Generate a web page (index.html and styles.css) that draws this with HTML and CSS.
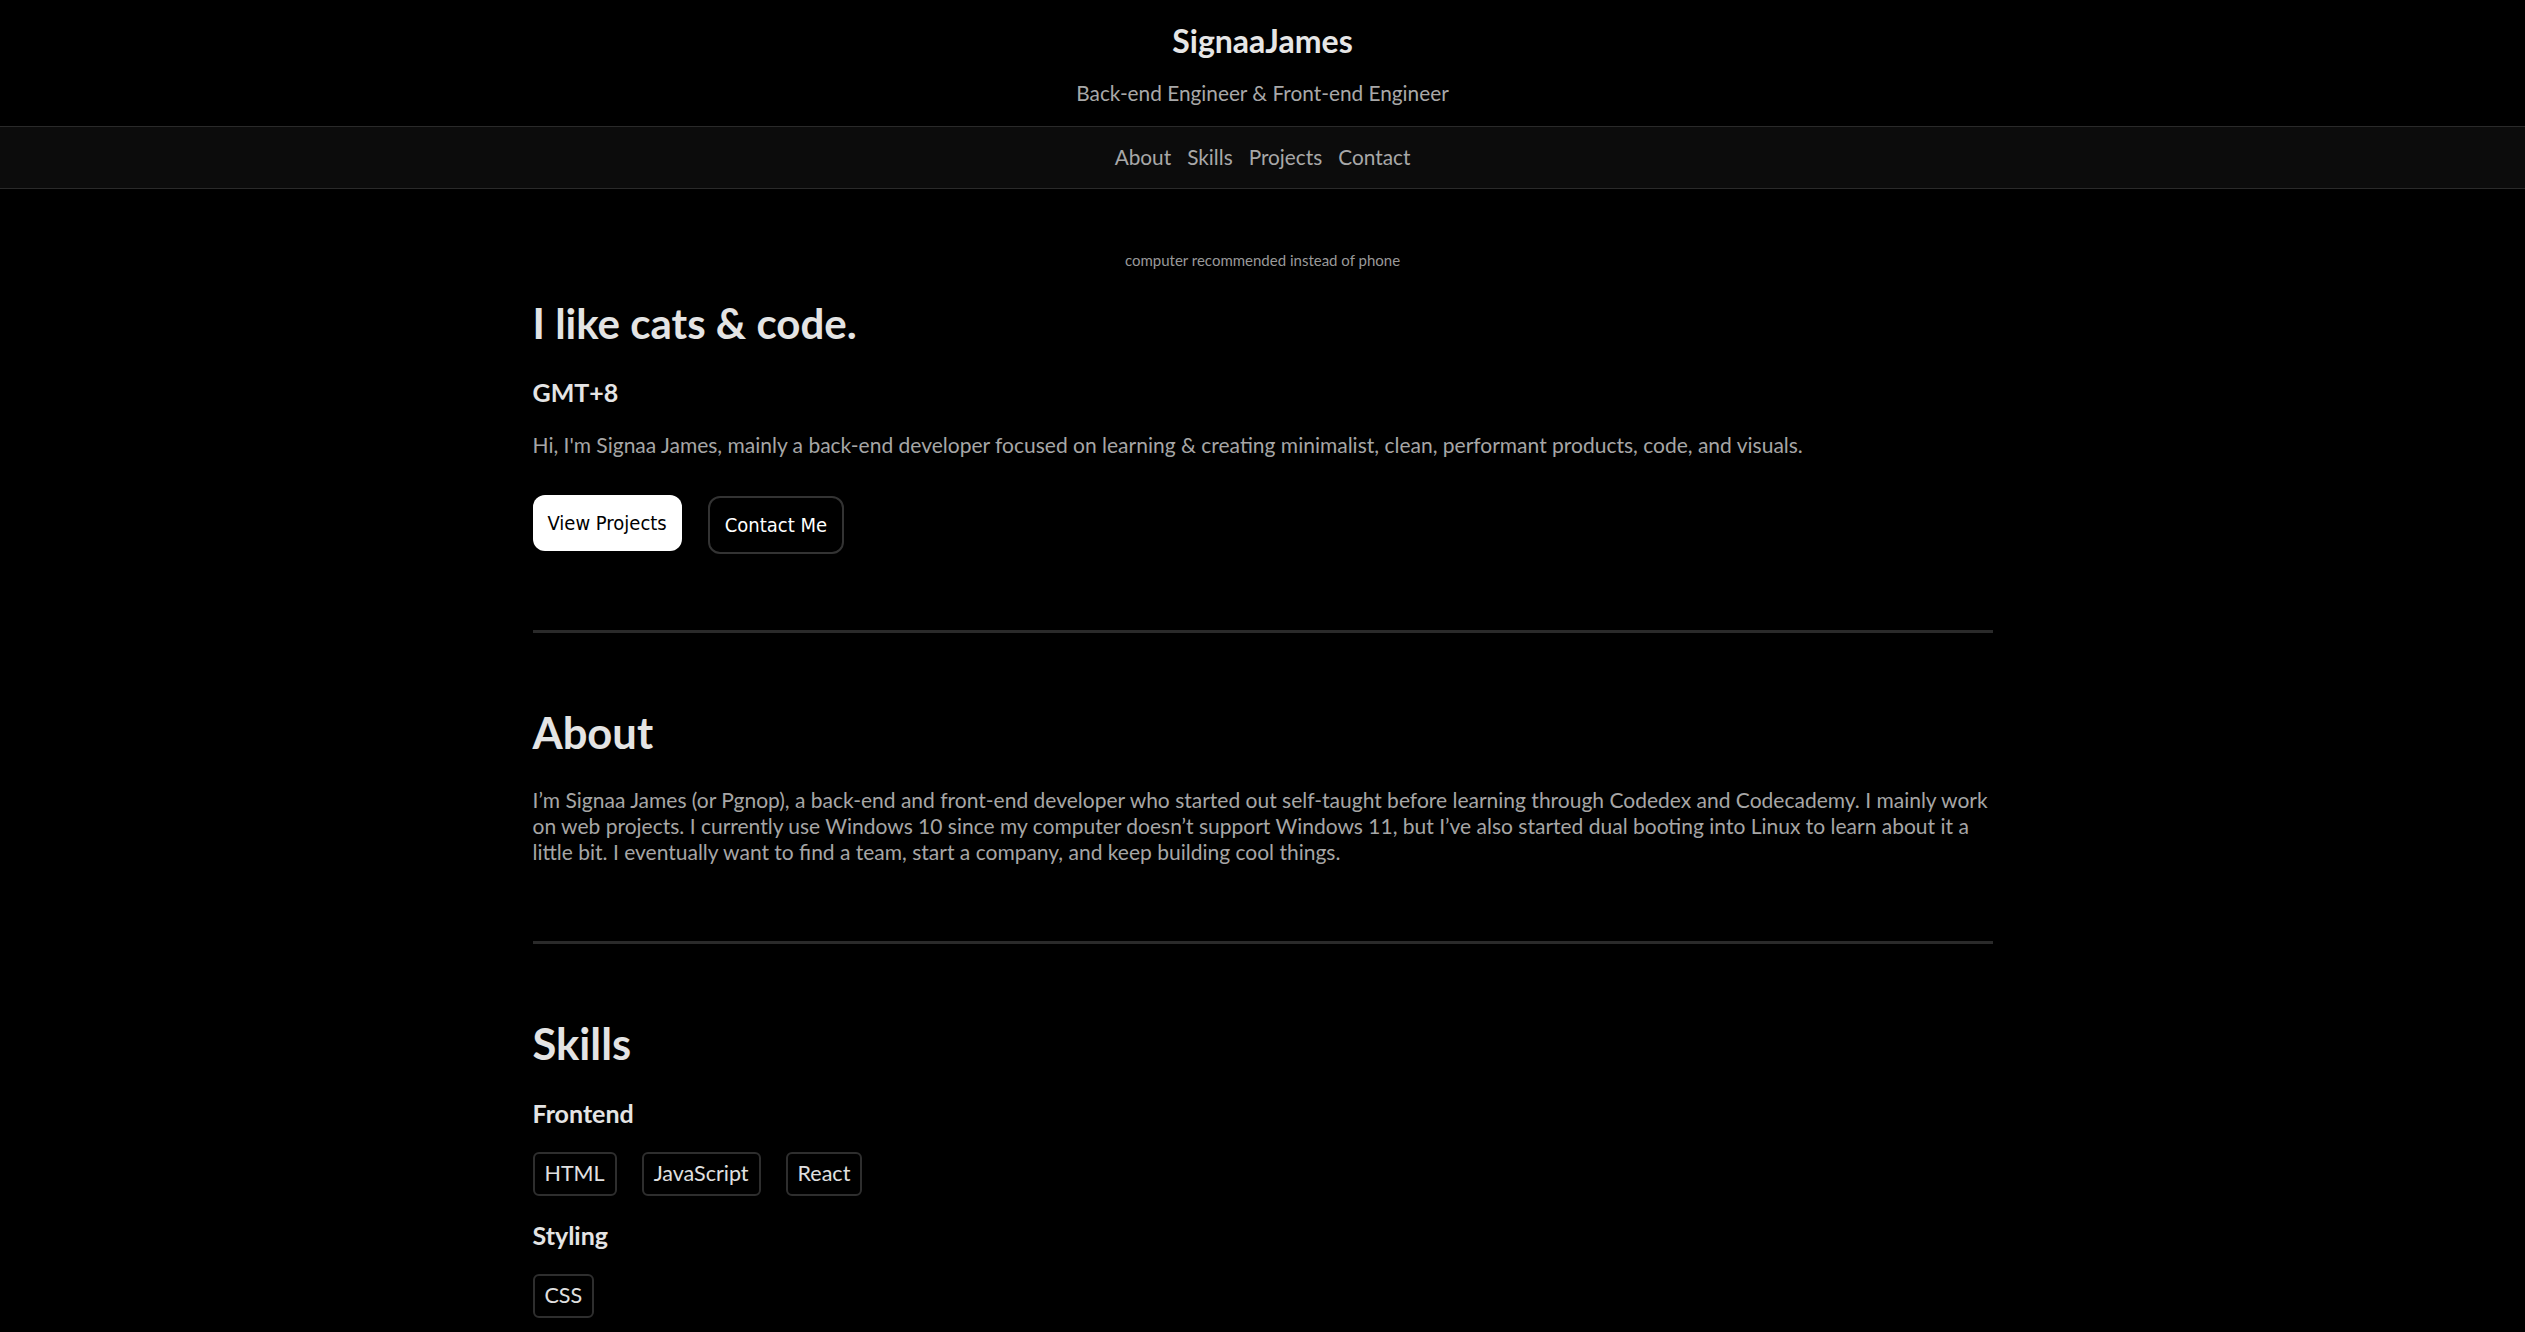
FILE: index.html
```html
<!DOCTYPE html>
<html lang="en">
<head>
<meta charset="utf-8">
<title>SignaaJames</title>
<link rel="stylesheet" href="styles.css">
</head>
<body>
<header class="site-header">
  <h1 class="brand">SignaaJames</h1>
  <p class="tagline">Back-end Engineer &amp; Front-end Engineer</p>
</header>
<nav class="site-nav">
  <a href="#about">About</a>
  <a href="#skills">Skills</a>
  <a href="#projects">Projects</a>
  <a href="#contact">Contact</a>
</nav>
<main class="container">
  <section class="hero">
    <p class="note">computer recommended instead of phone</p>
    <h2 class="big hero-title">I like cats &amp; code.</h2>
    <h3 class="sub">GMT+8</h3>
    <p class="text">Hi, I'm Signaa James, mainly a back-end developer focused on learning &amp; creating minimalist, clean, performant products, code, and visuals.</p>
    <div class="actions">
      <a class="btn btn-primary" href="#projects">View Projects</a>
      <button class="btn btn-outline" type="button">Contact Me</button>
    </div>
  </section>
  <hr class="divider">
  <section class="about" id="about">
    <h2 class="big">About</h2>
    <p class="text">I’m Signaa James (or Pgnop), a back-end and front-end developer who started out self-taught before learning through Codedex and Codecademy. I mainly work on web projects. I currently use Windows 10 since my computer doesn’t support Windows 11, but I’ve also started dual booting into Linux to learn about it a little bit. I eventually want to find a team, start a company, and keep building cool things.</p>
  </section>
  <hr class="divider">
  <section class="skills" id="skills">
    <h2 class="big">Skills</h2>
    <h3 class="sub">Frontend</h3>
    <div class="tags">
      <span class="tag">HTML</span>
      <span class="tag">JavaScript</span>
      <span class="tag">React</span>
    </div>
    <h3 class="sub">Styling</h3>
    <div class="tags">
      <span class="tag">CSS</span>
    </div>
  </section>
</main>
</body>
</html>
```

FILE: styles.css
```css
html, body {
  margin: 0;
  padding: 0;
  background: #000;
}
body {
  font-family: Lato, "Open Sans", sans-serif;
  color: #e4e4e4;
  line-height: 1.2;
}
.site-header {
  text-align: center;
  padding: 21.5px 0 20px;
}
.brand {
  margin: 0 0 21px;
  font-size: 32px;
  font-weight: 700;
  color: #e6e6e6;
  line-height: 1.2;
}
.tagline {
  margin: 0;
  font-size: 20.8px;
  color: #a8a8a8;
}
.site-nav {
  display: flex;
  justify-content: center;
  gap: 16px;
  background: #0c0c0c;
  border-top: 1px solid #2a2a2a;
  border-bottom: 1px solid #2a2a2a;
  padding: 18px 0;
}
.site-nav a {
  font-size: 20.8px;
  color: #a8a8a8;
  text-decoration: none;
}
.container {
  max-width: 1460px;
  margin: 0 auto;
}
.hero {
  padding-top: 62px;
}
.note {
  text-align: center;
  font-size: 15px;
  color: #999;
  margin: 0 0 29.5px;
}
.big {
  font-size: 43.5px;
  font-weight: 700;
  color: #e4e4e4;
  margin: 0 0 28px;
}
.hero-title {
  font-size: 42px;
}
.sub {
  font-size: 25px;
  font-weight: 700;
  color: #e4e4e4;
  margin: 0 0 26px;
}
.hero .sub {
  margin-bottom: 25px;
}
.text {
  font-size: 21px;
  line-height: 26px;
  color: #a6a6a6;
  margin: 0;
}
.hero .text {
  margin-bottom: 37px;
}
.actions {
  display: flex;
  align-items: flex-start;
  gap: 26px;
}
.btn {
  font-family: "DejaVu Sans Condensed", "DejaVu Sans", sans-serif;
  font-stretch: condensed;
  font-size: 20px;
  line-height: 22px;
  border-radius: 12px;
  text-decoration: none;
  cursor: pointer;
}
.btn-primary {
  background: #fff;
  color: #000;
  padding: 17px 15px;
}
.btn-outline {
  background: #000;
  color: #fff;
  border: 2px solid #333;
  padding: 16px 15px;
  margin-top: 1px;
}
.divider {
  border: none;
  height: 3px;
  background: #2a2a2a;
  margin: 76px 0 73px;
}
.about .big {
  margin-bottom: 29px;
}
.skills .big {
  margin-bottom: 29px;
}
.skills .sub {
  margin-bottom: 24px;
}
.tags {
  display: flex;
  gap: 25px;
  margin-bottom: 24px;
}
.tag {
  font-size: 21.5px;
  color: #e0e0e0;
  border: 2px solid #2e2e2e;
  border-radius: 6px;
  padding: 7px 10px;
  line-height: 1.2;
}
```
